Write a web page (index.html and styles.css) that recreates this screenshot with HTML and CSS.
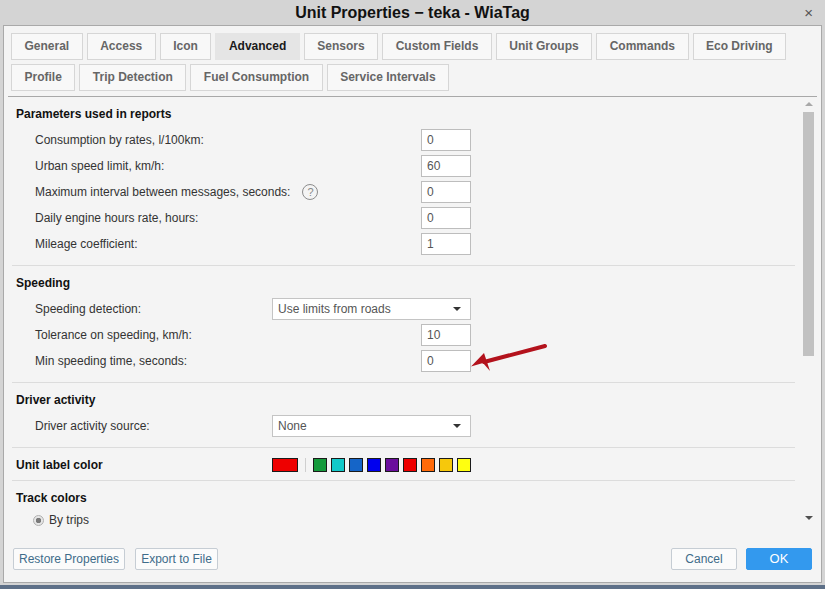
FILE: index.html
```html
<!DOCTYPE html>
<html>
<head>
<meta charset="utf-8">
<link rel="stylesheet" href="styles.css">
</head>
<body>
<div class="window">
  <div class="titlebar">
    <span></span>
    <span class="title">Unit Properties − teka - WiaTag</span>
    <span class="close">×</span>
  </div>
  <div class="panel">
    <div class="tabs">
      <div class="tabrow">
        <div class="tab">General</div>
        <div class="tab">Access</div>
        <div class="tab">Icon</div>
        <div class="tab active">Advanced</div>
        <div class="tab">Sensors</div>
        <div class="tab">Custom Fields</div>
        <div class="tab">Unit Groups</div>
        <div class="tab">Commands</div>
        <div class="tab">Eco Driving</div>
      </div>
      <div class="tabrow">
        <div class="tab">Profile</div>
        <div class="tab">Trip Detection</div>
        <div class="tab">Fuel Consumption</div>
        <div class="tab">Service Intervals</div>
      </div>
    </div>
    <div class="body">
      <div class="scroll">
        <div class="section">
          <div class="sec-title">Parameters used in reports</div>
          <div class="rows">
            <div class="row"><span class="label">Consumption by rates, l/100km:</span><span class="input">0</span></div>
            <div class="row"><span class="label">Urban speed limit, km/h:</span><span class="input">60</span></div>
            <div class="row"><span class="label">Maximum interval between messages, seconds:<span class="help">?</span></span><span class="input">0</span></div>
            <div class="row"><span class="label">Daily engine hours rate, hours:</span><span class="input">0</span></div>
            <div class="row"><span class="label">Mileage coefficient:</span><span class="input">1</span></div>
          </div>
        </div>
        <div class="section">
          <div class="sec-title">Speeding</div>
          <div class="rows">
            <div class="row"><span class="label">Speeding detection:</span><span class="select"><span>Use limits from roads</span><span class="caret"></span></span></div>
            <div class="row"><span class="label">Tolerance on speeding, km/h:</span><span class="input">10</span></div>
            <div class="row"><span class="label">Min speeding time, seconds:</span><span class="input">0</span></div>
          </div>
        </div>
        <div class="section">
          <div class="sec-title">Driver activity</div>
          <div class="rows">
            <div class="row"><span class="label">Driver activity source:</span><span class="select"><span>None</span><span class="caret"></span></span></div>
          </div>
        </div>
        <div class="section section-tight">
          <div class="colorrow">
            <div class="sec-title">Unit label color</div>
            <div class="swatches">
              <span class="sw big c-red"></span>
              <span class="divider"></span>
              <span class="sw c-green"></span>
              <span class="sw c-cyan"></span>
              <span class="sw c-mblue"></span>
              <span class="sw c-blue"></span>
              <span class="sw c-purple"></span>
              <span class="sw c-red"></span>
              <span class="sw c-orange"></span>
              <span class="sw c-gold"></span>
              <span class="sw c-yellow"></span>
            </div>
          </div>
        </div>
        <div class="section">
          <div class="sec-title">Track colors</div>
          <div class="radiorow"><span class="radio"></span><span class="label">By trips</span></div>
        </div>
      </div>
      <div class="scrollbar">
        <div class="sb-up"></div>
        <div class="sb-thumb"></div>
        <div class="sb-track"></div>
        <div class="sb-down"></div>
      </div>
    </div>
    <div class="footer">
      <div class="btn w-restore">Restore Properties</div>
      <div class="btn w-export">Export to File</div>
      <div class="spacer"></div>
      <div class="btn w-cancel">Cancel</div>
      <div class="btn primary w-ok">OK</div>
    </div>
  </div>
</div>
<svg class="annot" width="825" height="589" viewBox="0 0 825 589">
  <line x1="545" y1="346" x2="484" y2="362" stroke="#b3121c" stroke-width="4" stroke-linecap="round"/>
  <polygon points="471,366.5 484,353 490,371 483,363" fill="#b3121c"/>
</svg>
</body>
</html>
```

FILE: styles.css
```css
* { box-sizing: border-box; }

body {
  margin: 0;
  width: 825px;
  height: 589px;
  overflow: hidden;
  position: relative;
  background: #5e7088;
  font-family: "Liberation Sans", Arial, sans-serif;
  font-size: 12px;
  color: #333;
}

.window {
  height: 585px;
  background: #d4d4d4;
  display: flex;
  flex-direction: column;
}

.titlebar {
  height: 25px;
  display: grid;
  grid-template-columns: 1fr auto 1fr;
  align-items: center;
}

.title {
  font-size: 16px;
  font-weight: bold;
  color: #111;
}

.close {
  justify-self: end;
  padding-right: 12px;
  font-size: 15px;
  color: #555;
}

.panel {
  height: 558px;
  margin: 0 3px;
  background: #f4f4f4;
  border: 1px solid #a9a9a9;
  display: flex;
  flex-direction: column;
}

.tabs {
  padding: 7px 0 0 7px;
}

.tabrow {
  display: flex;
  gap: 4px;
}

.tabrow + .tabrow {
  margin-top: 4px;
}

.tab {
  height: 27px;
  line-height: 25px;
  padding: 0 12.5px;
  border: 1px solid #d6d6d6;
  background: #f8f8f8;
  font-size: 12px;
  font-weight: bold;
  color: #666;
  white-space: nowrap;
}

.tab.active {
  background: #e5e5e5;
  border-color: #e5e5e5;
  color: #1a1a1a;
}

.body {
  margin: 5px 4px 0;
  border-top: 1px solid #a8a8a8;
  height: 431px;
  display: flex;
}

.scroll {
  flex: 1;
  overflow: hidden;
}

.section {
  margin: 0 8px 0 4px;
  padding: 8px 4px 10px;
  border-bottom: 1px solid #dcdcdc;
}

.section-tight {
  padding-bottom: 6px;
}

.sec-title {
  font-size: 12px;
  font-weight: bold;
  line-height: 18px;
  color: #111;
}

.rows {
  margin-top: 6px;
  padding-left: 19px;
  display: flex;
  flex-direction: column;
  gap: 4px;
}

.row {
  display: grid;
  grid-template-columns: 237px 199px;
  align-items: center;
  height: 22px;
}

.label {
  display: flex;
  align-items: center;
  color: #333;
  white-space: nowrap;
}

.help {
  flex-shrink: 0;
  width: 16px;
  height: 16px;
  margin-left: 12px;
  border: 1px solid #8c8c8c;
  border-radius: 50%;
  display: inline-flex;
  justify-content: center;
  align-items: center;
  font-size: 11px;
  color: #888;
}

.input {
  justify-self: end;
  width: 50px;
  height: 22px;
  line-height: 20px;
  padding-left: 5px;
  border: 1px solid #bdbdbd;
  background: #fff;
  color: #555;
}

.select {
  width: 199px;
  height: 22px;
  padding: 0 9px 0 5px;
  border: 1px solid #c4c4c4;
  background: #fff;
  color: #555;
  display: flex;
  justify-content: space-between;
  align-items: center;
}

.caret {
  width: 0;
  height: 0;
  border-left: 4px solid transparent;
  border-right: 4px solid transparent;
  border-top: 4px solid #333;
}

.colorrow {
  display: grid;
  grid-template-columns: 256px auto;
  align-items: center;
}

.swatches {
  display: flex;
  align-items: center;
  gap: 4px;
}

.sw {
  width: 14px;
  height: 14px;
  border: 1px solid #1a1a1a;
}

.sw.big {
  width: 26px;
}

.divider {
  width: 1px;
  height: 14px;
  background: #cfcfcf;
  margin: 0 3px;
}

.c-red { background: #ee0000; }
.c-green { background: #159a3c; }
.c-cyan { background: #12c8c8; }
.c-mblue { background: #1565c8; }
.c-blue { background: #0000ee; }
.c-purple { background: #6a0e9c; }
.c-orange { background: #ff6a0a; }
.c-gold { background: #f6c80c; }
.c-yellow { background: #ffff10; }

.radiorow {
  margin-top: 4px;
  height: 18px;
  padding-left: 17px;
  display: flex;
  align-items: center;
  gap: 5px;
}

.radio {
  width: 11px;
  height: 11px;
  border-radius: 50%;
  border: 1px solid #b0b0b0;
  background: radial-gradient(circle, #7a7a7a 0 2.5px, #e6e6e6 3px);
}

.scrollbar {
  width: 11px;
  margin-right: 3px;
  display: flex;
  flex-direction: column;
  align-items: center;
}

.sb-up {
  height: 15px;
  width: 11px;
  display: flex;
  justify-content: center;
  padding-top: 5px;
}

.sb-up::before {
  content: "";
  border-left: 4px solid transparent;
  border-right: 4px solid transparent;
  border-bottom: 4px solid #a8a8a8;
  height: 0;
}

.sb-thumb {
  width: 11px;
  height: 244px;
  background: #c1c1c1;
}

.sb-track {
  flex: 1;
}

.sb-down {
  height: 14px;
  display: flex;
  justify-content: center;
  padding-top: 3px;
}

.sb-down::before {
  content: "";
  border-left: 4px solid transparent;
  border-right: 4px solid transparent;
  border-top: 4px solid #505050;
  height: 0;
}

.footer {
  display: flex;
  gap: 10px;
  padding: 21px 9px 0 9px;
}

.spacer {
  flex: 1;
}

.btn {
  height: 22px;
  line-height: 20px;
  text-align: center;
  border: 1px solid #c6cdd4;
  border-radius: 2px;
  background: #fbfbfb;
  color: #3e6c8a;
  font-size: 12px;
  white-space: nowrap;
}

.btn.primary {
  background: #3399ee;
  border-color: #3399ee;
  color: #fff;
  font-size: 13px;
}

.w-restore { width: 112px; }
.w-export { width: 83px; }
.w-cancel { width: 66px; margin-right: -1px; }
.w-ok { width: 66px; }

.annot {
  position: absolute;
  top: 0;
  left: 0;
  pointer-events: none;
}
```
